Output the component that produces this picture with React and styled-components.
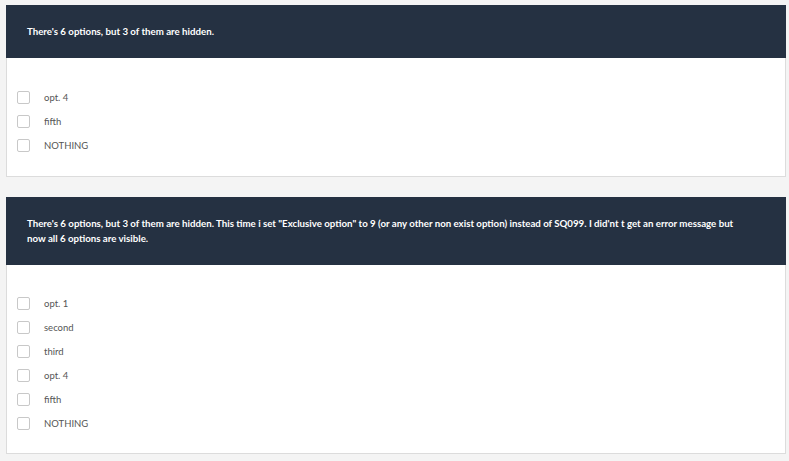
import React from 'react';
import styled, { createGlobalStyle } from 'styled-components';

const GlobalStyle = createGlobalStyle`
  html, body {
    margin: 0;
    padding: 0;
    background: #f4f4f4;
    font-family: Lato, "Open Sans", sans-serif;
  }
`;

const Page = styled.div`
  display: flex;
  flex-direction: column;
  gap: 20px;
  padding: 5px 3px 8px 6px;
`;

const Card = styled.section`
  background: #fff;
  border: 1px solid #dcdcdc;
  border-top: none;
`;

const Header = styled.div`
  background: #253142;
  color: #fff;
  font-weight: 700;
  font-size: 9.7px;
  line-height: 15px;
  padding: 19px 48px 19px 21px;
  margin: 0 -1px 0 -1px;
`;

const Body = styled.div`
  padding: ${(p) => p.$top}px 10px ${(p) => p.$bottom}px 10px;
  display: flex;
  flex-direction: column;
`;

const Row = styled.label`
  display: flex;
  align-items: center;
  height: 24px;
  gap: 14px;
  font-size: 9.5px;
  color: #555;
`;

const Box = styled.span`
  width: 11px;
  height: 11px;
  border: 1px solid #c8c8c8;
  border-radius: 2px;
  background: #fff;
`;

const Question = ({ text, options, top, bottom }) => (
  <Card>
    <Header>{text}</Header>
    <Body $top={top} $bottom={bottom}>
      {options.map((o) => (
        <Row key={o}>
          <Box />
          {o}
        </Row>
      ))}
    </Body>
  </Card>
);

const App = () => (
  <>
    <GlobalStyle />
    <Page>
      <Question
        top={27}
        bottom={19}
        text="There's 6 options, but 3 of them are hidden."
        options={['opt. 4', 'fifth', 'NOTHING']}
      />
      <Question
        top={26}
        bottom={18}
        text={'There\'s 6 options, but 3 of them are hidden. This time i set "Exclusive option" to 9 (or any other non exist option) instead of SQ099. I did\'nt t get an error message but now all 6 options are visible.'}
        options={['opt. 1', 'second', 'third', 'opt. 4', 'fifth', 'NOTHING']}
      />
    </Page>
  </>
);

export default App;
